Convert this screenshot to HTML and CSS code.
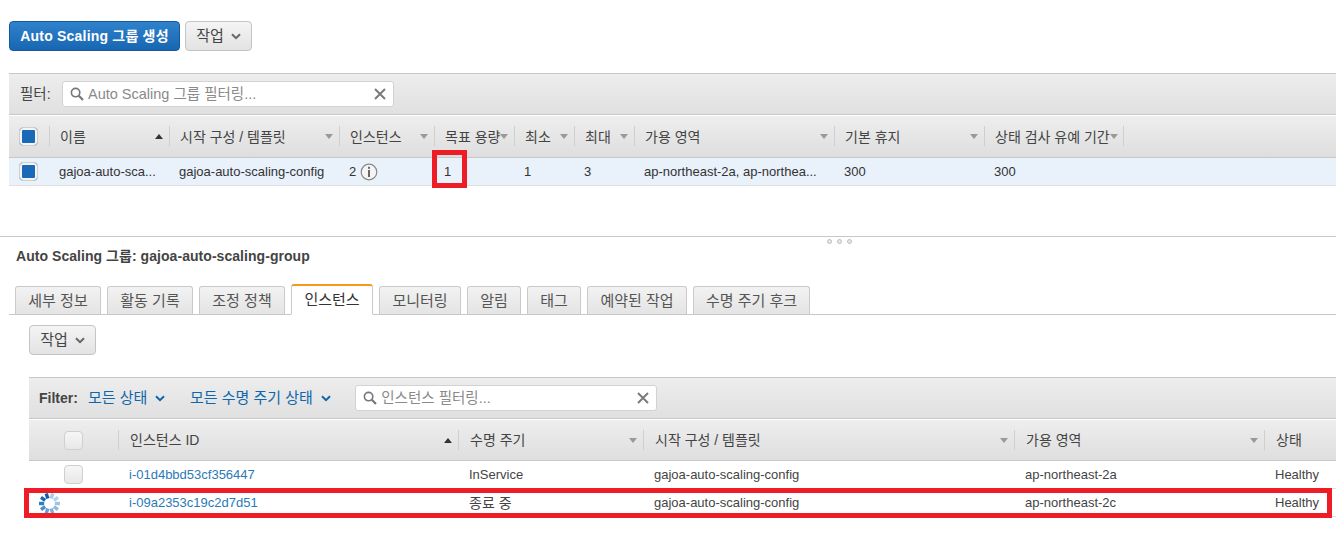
FILE: index.html
```html
<!DOCTYPE html>
<html lang="ko">
<head>
<meta charset="utf-8">
<title>Auto Scaling 그룹</title>
<link rel="stylesheet" href="styles.css">
</head>
<body>
<svg class="defs" width="0" height="0" aria-hidden="true">
  <symbol id="chev" viewBox="0 0 10 7"><path d="M1 1.2 5 5.2 9 1.2" fill="none" stroke="currentColor" stroke-width="2"/></symbol>
  <symbol id="mag" viewBox="0 0 14 14"><circle cx="5.6" cy="5.6" r="4.2" fill="none" stroke="#777" stroke-width="1.6"/><path d="M8.8 8.8 13 13" stroke="#777" stroke-width="2.2"/></symbol>
  <symbol id="clear" viewBox="0 0 12 12"><path d="M1 1 11 11M11 1 1 11" stroke="#7b7b7b" stroke-width="2"/></symbol>
</svg>

<section class="toolbar">
  <button class="btn primary">Auto Scaling 그룹 생성</button>
  <button class="btn">작업 <svg class="chev"><use href="#chev"/></svg></button>
</section>

<section class="master">
  <div class="filterbar">
    <span class="flabel">필터:</span>
    <div class="search search-top">
      <svg class="mag"><use href="#mag"/></svg>
      <span class="ph">Auto Scaling 그룹 필터링...</span>
      <svg class="clear"><use href="#clear"/></svg>
    </div>
  </div>
  <div class="grid top head">
    <div class="cell chk"><span class="check on"></span></div>
    <div class="cell th"><span class="sep"></span>이름<i class="sort up"></i></div>
    <div class="cell th"><span class="sep"></span>시작 구성 / 템플릿<i class="sort"></i></div>
    <div class="cell th"><span class="sep"></span>인스턴스<i class="sort"></i></div>
    <div class="cell th"><span class="sep"></span>목표 용량<i class="sort"></i></div>
    <div class="cell th"><span class="sep"></span>최소<i class="sort"></i></div>
    <div class="cell th"><span class="sep"></span>최대<i class="sort"></i></div>
    <div class="cell th"><span class="sep"></span>가용 영역<i class="sort"></i></div>
    <div class="cell th"><span class="sep"></span>기본 휴지<i class="sort"></i></div>
    <div class="cell th"><span class="sep"></span>상태 검사 유예 기간<i class="sort"></i><span class="sep end"></span></div>
  </div>
  <div class="grid top row selected">
    <div class="cell chk"><span class="check on"></span></div>
    <div class="cell td"><span class="ell">gajoa-auto-sca...</span></div>
    <div class="cell td"><span class="ell">gajoa-auto-scaling-config</span></div>
    <div class="cell td">2
      <svg class="info" viewBox="0 0 18 18"><circle cx="9" cy="9" r="7.8" fill="#f4f4f4" stroke="#8a8a8a" stroke-width="1.2"/><rect x="8" y="3.8" width="2" height="2" fill="#666"/><rect x="8" y="7" width="2" height="7" fill="#666"/></svg>
    </div>
    <div class="cell td">1<span class="mark mark-cell"></span></div>
    <div class="cell td">1</div>
    <div class="cell td">3</div>
    <div class="cell td"><span class="ell">ap-northeast-2a, ap-northea...</span></div>
    <div class="cell td">300</div>
    <div class="cell td">300</div>
  </div>
</section>

<section class="detail">
  <div class="dots"><i></i><i></i><i></i></div>
  <h2 class="title">Auto Scaling 그룹: gajoa-auto-scaling-group</h2>
  <nav class="tabs">
    <a class="tab w86">세부 정보</a>
    <a class="tab w86">활동 기록</a>
    <a class="tab w86">조정 정책</a>
    <a class="tab w82 active">인스턴스</a>
    <a class="tab w82">모니터링</a>
    <a class="tab w54">알림</a>
    <a class="tab w54">태그</a>
    <a class="tab w100">예약된 작업</a>
    <a class="tab w117">수명 주기 후크</a>
  </nav>
  <div class="pane">
    <button class="btn">작업 <svg class="chev"><use href="#chev"/></svg></button>
    <div class="instances">
      <div class="filterbar low">
        <span class="flabel bold">Filter:</span>
        <a class="dd">모든 상태 <svg class="chev blue"><use href="#chev"/></svg></a>
        <a class="dd">모든 수명 주기 상태 <svg class="chev blue"><use href="#chev"/></svg></a>
        <div class="search search-low">
          <svg class="mag"><use href="#mag"/></svg>
          <span class="ph">인스턴스 필터링...</span>
          <svg class="clear"><use href="#clear"/></svg>
        </div>
      </div>
      <div class="grid low head">
        <div class="cell chk2"><span class="check"></span></div>
        <div class="cell th"><span class="sep"></span>인스턴스 ID<i class="sort up"></i></div>
        <div class="cell th"><span class="sep"></span>수명 주기<i class="sort"></i></div>
        <div class="cell th"><span class="sep"></span>시작 구성 / 템플릿<i class="sort"></i></div>
        <div class="cell th"><span class="sep"></span>가용 영역<i class="sort"></i></div>
        <div class="cell th"><span class="sep"></span>상태</div>
      </div>
      <div class="grid low row plain">
        <div class="cell chk2"><span class="check"></span></div>
        <div class="cell td"><a class="link">i-01d4bbd53cf356447</a></div>
        <div class="cell td">InService</div>
        <div class="cell td">gajoa-auto-scaling-config</div>
        <div class="cell td">ap-northeast-2a</div>
        <div class="cell td">Healthy</div>
      </div>
      <div class="grid low row plain">
        <div class="cell spin">
          <svg viewBox="0 0 22 22" width="21" height="21">
            <rect x="9.2" y="0" width="3.6" height="5.4" fill="#a9cbe9" transform="rotate(18 11 11)"/>
            <rect x="9.2" y="0" width="3.6" height="5.4" fill="#b5d2ec" transform="rotate(54 11 11)"/>
            <rect x="9.2" y="0" width="3.6" height="5.4" fill="#9fc4e6" transform="rotate(90 11 11)"/>
            <rect x="9.2" y="0" width="3.6" height="5.4" fill="#8fbae1" transform="rotate(126 11 11)"/>
            <rect x="9.2" y="0" width="3.6" height="5.4" fill="#7dafdb" transform="rotate(162 11 11)"/>
            <rect x="9.2" y="0" width="3.6" height="5.4" fill="#659fd3" transform="rotate(198 11 11)"/>
            <rect x="9.2" y="0" width="3.6" height="5.4" fill="#4a8ecb" transform="rotate(234 11 11)"/>
            <rect x="9.2" y="0" width="3.6" height="5.4" fill="#2f7cc0" transform="rotate(270 11 11)"/>
            <rect x="9.2" y="0" width="3.6" height="5.4" fill="#1768b2" transform="rotate(306 11 11)"/>
            <rect x="9.2" y="0" width="3.6" height="5.4" fill="#0f5ea8" transform="rotate(342 11 11)"/>
          </svg>
        </div>
        <div class="cell td"><a class="link">i-09a2353c19c2d7d51</a></div>
        <div class="cell td kr">종료 중</div>
        <div class="cell td">gajoa-auto-scaling-config</div>
        <div class="cell td">ap-northeast-2c</div>
        <div class="cell td">Healthy</div>
        <span class="mark mark-row"></span>
      </div>
    </div>
  </div>
</section>
</body>
</html>
```

FILE: styles.css
```css
* { box-sizing: border-box; }
html, body { margin: 0; padding: 0; }
body {
  width: 1336px;
  height: 554px;
  overflow: hidden;
  background: #fff;
  color: #333;
  font: 13px/16px "Liberation Sans", "Noto Sans CJK KR", sans-serif;
}
.defs { position: absolute; }

.toolbar { display: flex; gap: 5px; padding: 21px 0 22px 9px; }
.btn {
  display: inline-flex;
  align-items: center;
  justify-content: center;
  gap: 7px;
  height: 30px;
  width: 67px;
  padding: 0;
  border: 1px solid #c4c4c4;
  border-radius: 4px;
  background: linear-gradient(#f4f4f4, #e3e3e3);
  color: #444;
  font: 15px/16px "Liberation Sans", "Noto Sans CJK KR", sans-serif;
}
.btn.primary {
  width: 171px;
  border-color: #15599c;
  background: linear-gradient(#2f82cc, #1866b2);
  color: #fff;
  font-size: 14px;
  font-weight: 700;
  letter-spacing: .2px;
}
.chev { width: 10px; height: 7px; color: #666; }
.chev.blue { color: #0f66ac; }

.master { margin-left: 9px; }
.filterbar {
  display: flex;
  align-items: center;
  height: 42px;
  padding-left: 11px;
  border-top: 1px solid #c8c8c8;
  border-bottom: 1px solid #c8c8c8;
  background: linear-gradient(#ededed, #e0e0e0);
}
.flabel { width: 42px; flex: none; color: #444; font-size: 14.5px; }
.flabel.bold { width: 49px; font-size: 14px; font-weight: 700; }
.search {
  position: relative;
  display: flex;
  align-items: center;
  height: 26px;
  border: 1px solid #d2d2d2;
  border-radius: 3px;
  background: #fff;
  padding-left: 7px;
  color: #8a8a8a;
  font-size: 14.5px;
}
.search-top { width: 332px; }
.search-low { width: 302px; }
.mag { width: 14px; height: 14px; margin-right: 4px; flex: none; }
.ph { flex: 1; }
.clear { width: 12px; height: 12px; margin-right: 7px; flex: none; }

.grid { display: grid; }
.grid.top { grid-template-columns: 40px 120px 170px 95px 80px 60px 60px 200px 150px 140px 202px; }
.grid.low { grid-template-columns: 89px 340px 185px 371px 250px 1fr; }
.head {
  height: 42px;
  border-bottom: 1px solid #c8c8c8;
  background: linear-gradient(#eeeeee, #dedede);
  border-top: 1px solid #fff;
  color: #444;
  font-size: 14px;
}
.top.head { height: 43px; }
.row { height: 28px; border-bottom: 1px solid #dfdfdf; position: relative; }
.row.selected { background: #e9f1fb; }
.row.plain { color: #444; }
.cell { position: relative; display: flex; align-items: center; min-width: 0; white-space: nowrap; }
.th { padding-left: 11px; }
.td { padding-left: 10px; }
.low .th { padding-left: 12px; }
.low .td { padding-left: 11px; }
.kr { font-size: 14px; }
.chk { padding-left: 10px; }
.chk2 { padding-left: 35px; }
.sep { position: absolute; left: 0; top: 10px; width: 1px; height: 20px; background: #cfcfcf; }
.sep.end { left: auto; right: 0; }
.sort {
  position: absolute;
  right: 6px;
  top: 18px;
  width: 0;
  height: 0;
  border-left: 4px solid transparent;
  border-right: 4px solid transparent;
  border-top: 5px solid #999;
}
.sort.up { border-top: 0; border-bottom: 5px solid #333; }
.check {
  display: block;
  width: 19px;
  height: 19px;
  border: 1px solid #cfcfcf;
  border-radius: 4px;
  background: linear-gradient(#f6f6f6, #e8e8e8);
}
.check.on {
  background: #1a68b8;
  box-shadow: inset 0 0 0 2px #f4f4f4;
}
.ell { overflow: hidden; }
.info { width: 18px; height: 18px; margin-left: 4px; }
.mark { position: absolute; border: 5px solid #ee1c25; pointer-events: none; }
.mark-cell { left: -2px; top: -8px; width: 35px; height: 38px; }
.mark-row { left: -5px; top: -1px; width: 1308px; height: 30px; }

.detail { position: relative; margin-top: 50px; border-top: 1px solid #c8c8c8; }
.dots { position: absolute; top: 2px; left: 827px; display: flex; gap: 5px; }
.dots i { display: block; width: 5px; height: 5px; border: 1px solid #bdbdbd; border-radius: 50%; background: #e8e8e8; }
.title { margin: 0; padding: 11px 0 0 16px; height: 47px; font-size: 14px; line-height: 16px; font-weight: 700; color: #444; letter-spacing: .05px; }
.tabs {
  display: flex;
  gap: 6px;
  margin-left: 9px;
  padding-left: 6px;
  height: 31px;
  border-bottom: 1px solid #c8c8c8;
  align-items: flex-end;
}
.tab {
  display: flex;
  align-items: center;
  justify-content: center;
  height: 29px;
  margin-bottom: -1px;
  border: 1px solid #cacaca;
  border-bottom-color: #c8c8c8;
  border-radius: 3px 3px 0 0;
  background: linear-gradient(#f2f2f2, #e4e4e4);
  color: #555;
  font-size: 15px;
}
.tab.active {
  height: 31px;
  border-top: 2px solid #f7991c;
  border-bottom-color: #fff;
  background: #fff;
  color: #333;
}
.w86 { width: 86px; }
.w82 { width: 82px; }
.w54 { width: 54px; }
.w100 { width: 100px; }
.w117 { width: 117px; }
.pane { padding: 10px 0 0 29px; }
.instances { margin-top: 22px; }
.filterbar.low { height: 42px; padding-left: 10px; }
.dd { display: inline-flex; align-items: center; gap: 8px; margin-right: 24.5px; color: #0f66ac; font-size: 15px; }
.link { color: #2a7ab8; }
.spin { padding-left: 10px; padding-top: 1px; }
```
